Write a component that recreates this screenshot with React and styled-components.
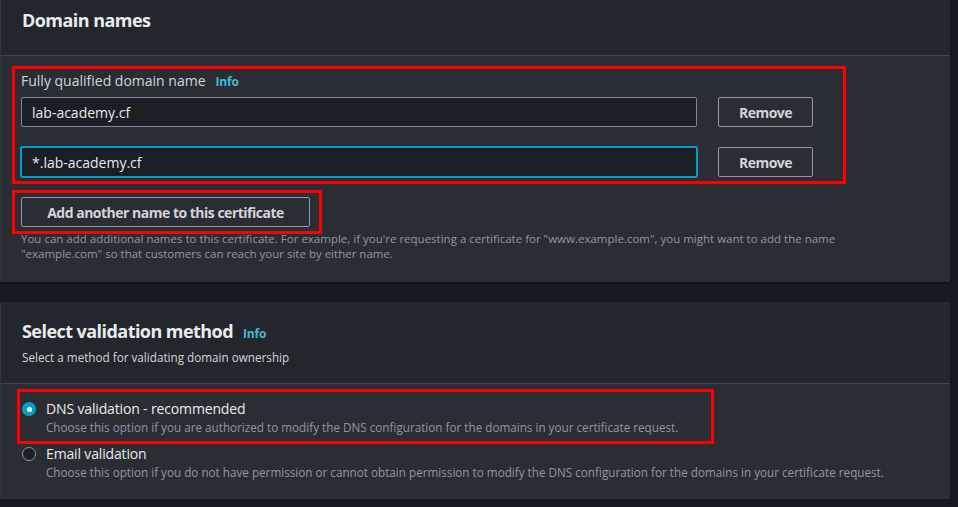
import styled, { createGlobalStyle } from 'styled-components';

const GlobalStyle = createGlobalStyle`
  html, body {
    margin: 0;
    padding: 0;
    background: #16191f;
  }
  body {
    font-family: "Open Sans", "Noto Sans", "Liberation Sans", sans-serif;
    color: #d1d5db;
  }
`;

const Page = styled.div`
  display: flex;
  flex-direction: column;
  gap: 20px;
  width: 949px;
  padding-left: 1px;
`;

const Card = styled.section`
  background: #2a2d33;
  box-shadow: -1px 0 0 #30343b, 0 1px 1px rgba(0, 0, 0, 0.4);
`;

const CardHeader = styled.header`
  background: #23262c;
  border-bottom: 1px solid #41464e;
  padding: ${({ $padding }) => $padding};
  display: flex;
  flex-direction: column;
  gap: 4px;
`;

const Title = styled.h2`
  margin: 0;
  font-size: 18px;
  line-height: 22px;
  font-weight: 700;
  letter-spacing: -0.55px;
  color: #e9ebed;
  display: flex;
  align-items: baseline;
  gap: 10px;
`;

const Info = styled.a`
  font-size: 12px;
  font-weight: 700;
  letter-spacing: -0.2px;
  color: #44b9d6;
  text-decoration: none;
`;

const Subtitle = styled.p`
  margin: 0;
  font-size: 11.7px;
  line-height: 16px;
  color: #d1d5db;
`;

const CardBody = styled.div`
  padding: ${({ $padding }) => $padding};
  display: flex;
  flex-direction: column;
  align-items: flex-start;
`;

const Annotated = styled.div`
  position: relative;
  margin-top: ${({ $gap = 0 }) => $gap}px;
  &::after {
    content: '';
    position: absolute;
    inset: ${({ $inset }) => $inset};
    width: ${({ $width }) => $width || 'auto'};
    border: 3px solid #ff0000;
    pointer-events: none;
  }
`;

const FieldGroup = styled.div`
  display: flex;
  flex-direction: column;
  width: 793px;
`;

const Label = styled.label`
  font-size: 14px;
  line-height: 20px;
  color: #d1d5db;
  display: flex;
  align-items: baseline;
  gap: 10px;
  margin-bottom: 5px;
`;

const Row = styled.div`
  display: flex;
  align-items: center;
  gap: 21px;
  & + & {
    margin-top: 20px;
  }
`;

const TextInput = styled.input`
  box-sizing: border-box;
  width: 676px;
  height: 30px;
  margin: 0;
  padding: 0 10px;
  background: #1a1e25;
  border: 1px solid ${({ $focused }) => ($focused ? '#00a1c9' : '#7d8998')};
  box-shadow: ${({ $focused }) => ($focused ? '0 0 0 1px #00a1c9' : 'none')};
  border-radius: 2px;
  font-family: inherit;
  font-size: 14px;
  color: #e9ebed;
  outline: none;
`;

const Button = styled.button`
  box-sizing: border-box;
  height: 30px;
  width: ${({ $width }) => $width};
  margin: 0;
  padding: 0;
  white-space: nowrap;
  background: transparent;
  border: 1px solid #8d99a8;
  border-radius: 2px;
  font-family: inherit;
  font-size: 14px;
  font-weight: 700;
  letter-spacing: -0.5px;
  color: #d1d5db;
  cursor: pointer;
`;

const Hint = styled.p`
  margin: 4px 0 0;
  font-size: 11.5px;
  line-height: 15px;
  color: #8d99a8;
  max-width: 860px;
`;

const Options = styled.div`
  display: flex;
  flex-direction: column;
  gap: 9px;
  align-self: stretch;
`;

const Option = styled.label`
  display: flex;
  align-items: flex-start;
  gap: 10px;
  cursor: pointer;
`;

const Radio = styled.span`
  box-sizing: border-box;
  flex: none;
  width: 14px;
  height: 14px;
  margin-top: 3px;
  border-radius: 50%;
  display: flex;
  align-items: center;
  justify-content: center;
  background: ${({ $checked }) => ($checked ? '#00a1c9' : '#1a1e25')};
  border: ${({ $checked }) => ($checked ? 'none' : '1.5px solid #8d99a8')};
  &::after {
    content: '';
    width: 5px;
    height: 5px;
    border-radius: 50%;
    background: #ffffff;
    display: ${({ $checked }) => ($checked ? 'block' : 'none')};
  }
`;

const OptionText = styled.span`
  display: flex;
  flex-direction: column;
`;

const OptionTitle = styled.span`
  font-size: 14px;
  line-height: 20px;
  letter-spacing: -0.15px;
  color: #e9ebed;
`;

const OptionDesc = styled.span`
  font-size: 11.7px;
  line-height: 16px;
  color: #8d99a8;
`;

const domains = [
  { value: 'lab-academy.cf' },
  { value: '*.lab-academy.cf', focused: true }
];

const methods = [
  {
    id: 'dns',
    title: 'DNS validation - recommended',
    desc: 'Choose this option if you are authorized to modify the DNS configuration for the domains in your certificate request.',
    checked: true
  },
  {
    id: 'email',
    title: 'Email validation',
    desc: 'Choose this option if you do not have permission or cannot obtain permission to modify the DNS configuration for the domains in your certificate request.'
  }
];

function MethodOption({ method }) {
  return (
    <Option>
      <Radio $checked={method.checked} />
      <OptionText>
        <OptionTitle>{method.title}</OptionTitle>
        <OptionDesc>{method.desc}</OptionDesc>
      </OptionText>
    </Option>
  );
}

export default function App() {
  return (
    <>
      <GlobalStyle />
      <Page>
        <Card>
          <CardHeader $padding="9px 20px 24px 21px">
            <Title>Domain names</Title>
          </CardHeader>
          <CardBody $padding="15px 20px 21px 20px">
            <Annotated $inset="-5px -32px -7px -9px">
              <FieldGroup>
                <Label>
                  Fully qualified domain name <Info>Info</Info>
                </Label>
                {domains.map((d) => (
                  <Row key={d.value}>
                    <TextInput readOnly value={d.value} $focused={d.focused} />
                    <Button $width="95px">Remove</Button>
                  </Row>
                ))}
              </FieldGroup>
            </Annotated>
            <Annotated $gap={20} $inset="-7px -12px -7px -9px">
              <Button $width="289px">Add another name to this certificate</Button>
            </Annotated>
            <Hint>
              You can add additional names to this certificate. For example, if you're requesting a
              certificate for "www.example.com", you might want to add the name "example.com" so that
              customers can reach your site by either name.
            </Hint>
          </CardBody>
        </Card>
        <Card>
          <CardHeader $padding="18px 20px 18px 21px">
            <Title>
              Select validation method <Info>Info</Info>
            </Title>
            <Subtitle>Select a method for validating domain ownership</Subtitle>
          </CardHeader>
          <CardBody $padding="15px 20px 19px 21px">
            <Options>
              {methods.map((m) =>
                m.checked ? (
                  <Annotated key={m.id} $inset="-10px auto -9px -5px" $width="691px">
                    <MethodOption method={m} />
                  </Annotated>
                ) : (
                  <MethodOption key={m.id} method={m} />
                )
              )}
            </Options>
          </CardBody>
        </Card>
      </Page>
    </>
  );
}
